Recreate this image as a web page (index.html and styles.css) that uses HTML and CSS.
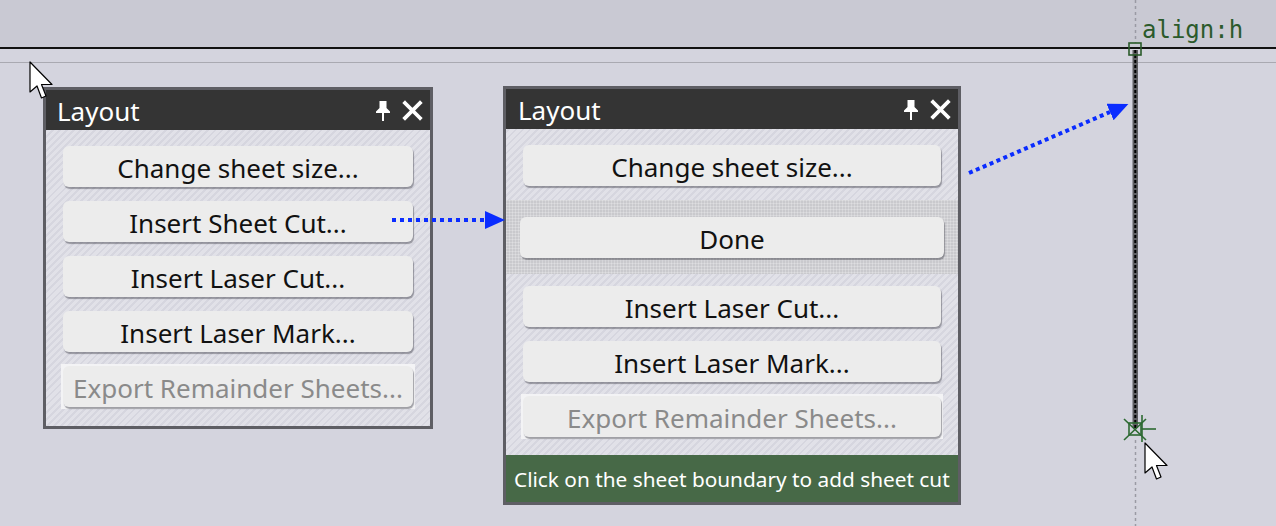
FILE: index.html
```html
<!DOCTYPE html>
<html>
<head>
<meta charset="utf-8">
<link rel="stylesheet" href="styles.css">
</head>
<body>
<div class="stage">
  <div class="topband"></div>
  <div class="rule-dark"></div>
  <div class="rule-space"></div>
  <div class="rule-light"></div>

  <div class="align-label">align:h</div>

  <section class="panel panel-a">
    <header class="panel-head">
      <span class="panel-title">Layout</span>
      <span class="panel-icons">
        <svg class="pin" width="16" height="21" viewBox="0 0 16 21"><path d="M4.5 1 H11.5 V8 L15 11.5 V13 H9 V21 H7 V13 H1 V11.5 L4.5 8 Z" fill="#fff"/></svg>
        <svg class="close" width="21" height="21" viewBox="0 0 21 21"><path d="M3 3 L18 18 M18 3 L3 18" stroke="#fff" stroke-width="3.8" stroke-linecap="square"/></svg>
      </span>
    </header>
    <div class="panel-body">
      <div class="btn">Change sheet size...</div>
      <div class="btn">Insert Sheet Cut...</div>
      <div class="btn">Insert Laser Cut...</div>
      <div class="btn">Insert Laser Mark...</div>
      <div class="btn-frame"><div class="btn disabled">Export Remainder Sheets...</div></div>
    </div>
  </section>

  <section class="panel panel-b">
    <header class="panel-head">
      <span class="panel-title">Layout</span>
      <span class="panel-icons">
        <svg class="pin" width="16" height="21" viewBox="0 0 16 21"><path d="M4.5 1 H11.5 V8 L15 11.5 V13 H9 V21 H7 V13 H1 V11.5 L4.5 8 Z" fill="#fff"/></svg>
        <svg class="close" width="21" height="21" viewBox="0 0 21 21"><path d="M3 3 L18 18 M18 3 L3 18" stroke="#fff" stroke-width="3.8" stroke-linecap="square"/></svg>
      </span>
    </header>
    <div class="panel-body top-part">
      <div class="btn">Change sheet size...</div>
    </div>
    <div class="active-band">
      <div class="btn">Done</div>
    </div>
    <div class="panel-body bottom-part">
      <div class="btn">Insert Laser Cut...</div>
      <div class="btn">Insert Laser Mark...</div>
      <div class="btn-frame"><div class="btn disabled">Export Remainder Sheets...</div></div>
    </div>
    <footer class="panel-status">Click on the sheet boundary to add sheet cut</footer>
  </section>

  <svg class="overlay" width="1276" height="526" viewBox="0 0 1276 526">
    <defs>
      <marker id="ah" markerWidth="5" markerHeight="4.5" refX="0" refY="2.25" orient="auto" markerUnits="strokeWidth">
        <path d="M0,0 L5,2.25 L0,4.5 Z" fill="#0a2cff"/>
      </marker>
    </defs>
    <line x1="1135.5" y1="0" x2="1135.5" y2="43" stroke="#9a9aa4" stroke-width="1.5" stroke-dasharray="3 3"/>
    <line x1="1135.5" y1="440" x2="1135.5" y2="526" stroke="#9a9aa4" stroke-width="1.5" stroke-dasharray="3 3"/>
    <rect x="1132.5" y="50" width="5.5" height="378" fill="#5e5e62"/>
    <line x1="1135.3" y1="50" x2="1135.3" y2="428" stroke="#000" stroke-width="2" stroke-dasharray="3 2"/>
    <rect x="1129" y="43" width="12" height="12" fill="none" stroke="#2a5a2a" stroke-width="1.6"/>
    <g stroke="#2d6a32" stroke-width="1.6" fill="none">
      <rect x="1129" y="423" width="12" height="12"/>
      <line x1="1124" y1="419" x2="1146" y2="440"/>
      <line x1="1124" y1="440" x2="1146" y2="419"/>
      <line x1="1142" y1="415" x2="1142" y2="442"/>
      <line x1="1142" y1="429" x2="1156" y2="429"/>
    </g>
    <line x1="392" y1="220" x2="485" y2="220" stroke="#0a2cff" stroke-width="4" stroke-dasharray="4 4" marker-end="url(#ah)"/>
    <line x1="969" y1="173" x2="1110" y2="112" stroke="#0a2cff" stroke-width="4" stroke-dasharray="4 3.5" marker-end="url(#ah)"/>
    <path d="M30 62 L30 92 L37 86 L41.5 98 L46 96 L41.5 84.5 L52 84.5 Z" fill="#fff" stroke="#000" stroke-width="1.2" stroke-linejoin="round"/>
    <path d="M1145 443 L1145 473 L1152 467 L1156.5 479 L1161 477 L1156.5 465.5 L1167 465.5 Z" fill="#fff" stroke="#000" stroke-width="1.2" stroke-linejoin="round"/>
  </svg>
</div>
</body>
</html>
```

FILE: styles.css
```css
html, body {
  margin: 0;
  padding: 0;
  background: #d3d3dd;
}

.stage {
  position: relative;
  width: 1276px;
  height: 526px;
  overflow: hidden;
  background: #d4d4de;
  font-family: "Noto Sans", "Open Sans", sans-serif;
}

.topband {
  height: 47px;
  background: #c9c9d3;
}

.rule-dark {
  height: 2px;
  background: #111;
}

.rule-space {
  height: 13px;
}

.rule-light {
  height: 1px;
  background: #a9a9b1;
}

.overlay {
  position: absolute;
  left: 0;
  top: 0;
  pointer-events: none;
}

.align-label {
  position: absolute;
  left: 1142px;
  top: 16px;
  font-family: "DejaVu Sans Mono", monospace;
  font-size: 24px;
  line-height: 28px;
  color: #2b5a2b;
}

.panel {
  position: absolute;
  border: 3px solid #5e5e64;
  background-color: #dcdce4;
  background-image: repeating-linear-gradient(-45deg, #d6d6df 0 2px, #e1e1e8 2px 5px);
  display: flex;
  flex-direction: column;
}

.panel-a {
  left: 43px;
  top: 87px;
  width: 384px;
}

.panel-b {
  left: 503px;
  top: 86px;
  width: 452px;
}

.panel-head {
  height: 40px;
  background: #343434;
  display: flex;
  align-items: center;
  justify-content: space-between;
  padding: 0 7px 0 11px;
}

.panel-b .panel-head {
  padding-left: 12px;
}

.panel-title {
  color: #fff;
  font-size: 26px;
  line-height: 30px;
  margin-top: 2px;
}

.panel-icons {
  display: flex;
  align-items: center;
  gap: 11px;
}

.panel-body {
  display: flex;
  flex-direction: column;
  gap: 14px;
  padding: 16px 17px 17px;
}

.panel-b .top-part {
  padding: 16px 17px 14px;
}

.panel-b .bottom-part {
  padding: 12px 17px 16px;
}

.btn {
  height: 41px;
  box-sizing: border-box;
  border-radius: 6px;
  background: #ececec;
  box-shadow: 1px 2px 1px rgba(60, 60, 70, 0.45);
  display: flex;
  align-items: center;
  justify-content: center;
  font-size: 26px;
  color: #111;
  white-space: nowrap;
  padding-top: 2px;
}

.btn-frame {
  margin: -2px -2px 0;
  padding: 2px;
  background: #f3f3f5;
}

.btn.disabled {
  color: #8a8a8a;
}

.active-band {
  padding: 17px 14px 16px;
  background-color: #c9c9cd;
  background-image:
    linear-gradient(90deg, rgba(255,255,255,0.22) 1px, transparent 1px),
    linear-gradient(rgba(255,255,255,0.22) 1px, transparent 1px);
  background-size: 3px 3px;
}

.panel-status {
  height: 47px;
  background: #476947;
  color: #fff;
  font-size: 20.8px;
  display: flex;
  align-items: center;
  padding-left: 8px;
  white-space: nowrap;
}
```
